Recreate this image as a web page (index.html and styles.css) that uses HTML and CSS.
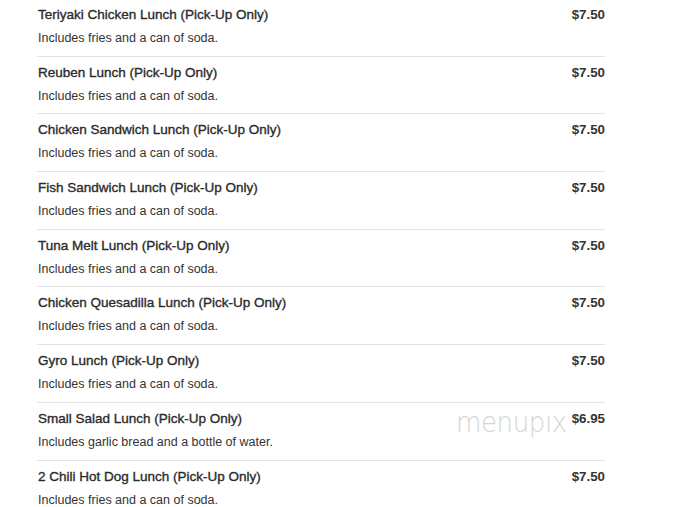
FILE: index.html
```
<!DOCTYPE html>
<html>
<head>
<meta charset="utf-8">
<link rel="stylesheet" href="styles.css">
</head>
<body>
<div class="menu">
  <div class="item"><div class="info"><div class="name">Teriyaki Chicken Lunch (Pick-Up Only)</div><div class="desc">Includes fries and a can of soda.</div></div><div class="price">$7.50</div></div>
  <div class="item"><div class="info"><div class="name">Reuben Lunch (Pick-Up Only)</div><div class="desc">Includes fries and a can of soda.</div></div><div class="price">$7.50</div></div>
  <div class="item"><div class="info"><div class="name">Chicken Sandwich Lunch (Pick-Up Only)</div><div class="desc">Includes fries and a can of soda.</div></div><div class="price">$7.50</div></div>
  <div class="item"><div class="info"><div class="name">Fish Sandwich Lunch (Pick-Up Only)</div><div class="desc">Includes fries and a can of soda.</div></div><div class="price">$7.50</div></div>
  <div class="item"><div class="info"><div class="name">Tuna Melt Lunch (Pick-Up Only)</div><div class="desc">Includes fries and a can of soda.</div></div><div class="price">$7.50</div></div>
  <div class="item"><div class="info"><div class="name">Chicken Quesadilla Lunch (Pick-Up Only)</div><div class="desc">Includes fries and a can of soda.</div></div><div class="price">$7.50</div></div>
  <div class="item"><div class="info"><div class="name">Gyro Lunch (Pick-Up Only)</div><div class="desc">Includes fries and a can of soda.</div></div><div class="price">$7.50</div></div>
  <div class="item"><div class="info"><div class="name">Small Salad Lunch (Pick-Up Only)</div><div class="desc">Includes garlic bread and a bottle of water.</div></div><div class="price">$6.95</div><div class="watermark">menupıx</div></div>
  <div class="item"><div class="info"><div class="name">2 Chili Hot Dog Lunch (Pick-Up Only)</div><div class="desc">Includes fries and a can of soda.</div></div><div class="price">$7.50</div></div>
</div>
</body>
</html>
```
FILE: styles.css
```
html, body { margin: 0; padding: 0; background: #fff; }
body { font-family: "Liberation Sans", Arial, sans-serif; color: #333; }
.menu { width: 568px; margin-left: 37px; margin-top: -1px; }
.item { position: relative; display: flex; justify-content: space-between; align-items: flex-start; height: 56.7px; box-sizing: content-box; border-bottom: 1px solid #e3e3e3; padding-left: 1px; }
.info { padding-top: 7px; }
.name { font-size: 13.5px; font-weight: normal; line-height: 18px; color: #2b2b2b; -webkit-text-stroke: 0.35px #2b2b2b; }
.desc { font-size: 12.5px; line-height: 18px; margin-top: 5px; color: #333; }
.price { padding-top: 7px; font-size: 13.3px; font-weight: bold; line-height: 18px; color: #333; }
.watermark { position: absolute; left: 419px; top: 2px; font-family: "DejaVu Sans", sans-serif; font-weight: 200; font-size: 29px; color: #d6d6d6; transform: scaleX(0.9); transform-origin: left top; letter-spacing: -0.5px; }
```
